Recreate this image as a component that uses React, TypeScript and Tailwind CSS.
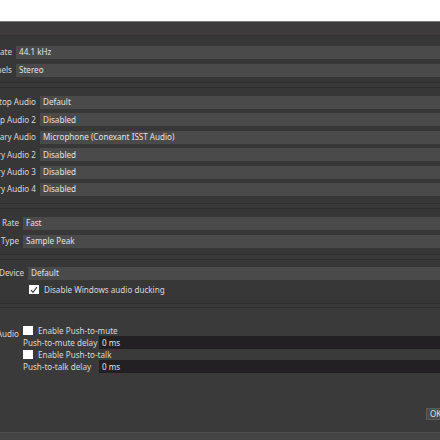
import React from 'react';

const font = { fontFamily: '"Noto Sans", "Open Sans", sans-serif' };

function Field({ label, value, labelW, dark, left }: { label: string; value: string; labelW: string; dark?: boolean; left?: boolean }) {
  return (
    <div className="flex h-[13px] items-center">
      <div className={`${labelW} shrink-0 flex ${left ? 'justify-start' : 'justify-end pr-[4px]'} whitespace-nowrap text-[#d8d8d8]`}>
        <span>{label}</span>
      </div>
      <div className={`flex-1 h-full flex items-center pl-[3px] text-[#e2e2e2] ${dark ? 'bg-[#222022]' : 'bg-[#4a4a4a]'}`}>
        {value}
      </div>
    </div>
  );
}

function Check({ checked, label }: { checked?: boolean; label: string }) {
  return (
    <div className="flex items-center h-[10px] gap-[5px] text-[#d8d8d8]">
      <div className="w-[10px] h-[9px] bg-white flex items-center justify-center">
        {checked && (
          <svg width="8" height="8" viewBox="0 0 8 8">
            <path d="M1 4.2 L3 6.4 L7 1" fill="none" stroke="#333" strokeWidth="1.1" />
          </svg>
        )}
      </div>
      <span>{label}</span>
    </div>
  );
}

export default function App() {
  return (
    <div className="w-[440px] h-[440px] overflow-hidden bg-[#3a393a] flex flex-col text-[8.1px] leading-none" style={font}>
      <div className="h-[21px] bg-white shrink-0" />
      <div className="h-[1px] bg-[#7d7d7d] shrink-0" />
      <div className="h-[14px] bg-[#3e3b3c] border-b border-[#333233] shrink-0" />

      {/* General */}
      <div className="bg-[#383738] pt-[10px] pb-[5px] flex flex-col gap-[5px] border-b border-[#2f2e2f]">
        <Field labelW="w-[16px]" label="Sample Rate" value="44.1 kHz" />
        <Field labelW="w-[16px]" label="Channels" value="Stereo" />
      </div>
      <div className="h-[4px] bg-[#3a393a]" />

      {/* Global Audio Devices */}
      <div className="bg-[#383738] border-t border-[#2f2e2f] pt-[8px] pb-[7px] flex flex-col gap-[4.4px] border-b">
        <Field labelW="w-[40px]" label="Desktop Audio" value="Default" />
        <Field labelW="w-[40px]" label="Desktop Audio 2" value="Disabled" />
        <Field labelW="w-[40px]" label="Mic/Auxiliary Audio" value="Microphone (Conexant ISST Audio)" />
        <Field labelW="w-[40px]" label="Mic/Auxiliary Audio 2" value="Disabled" />
        <Field labelW="w-[40px]" label="Mic/Auxiliary Audio 3" value="Disabled" />
        <Field labelW="w-[40px]" label="Mic/Auxiliary Audio 4" value="Disabled" />
      </div>
      <div className="h-[4px] bg-[#3a393a]" />

      {/* Meters */}
      <div className="bg-[#383738] border-y border-[#2f2e2f] pt-[8px] pb-[6px] flex flex-col gap-[5px]">
        <Field labelW="w-[23px]" label="Decay Rate" value="Fast" />
        <Field labelW="w-[23px]" label="Peak Meter Type" value="Sample Peak" />
      </div>
      <div className="h-[4px] bg-[#3a393a]" />

      {/* Advanced */}
      <div className="bg-[#383738] border-y border-[#2f2e2f] pt-[7px] pb-[8px] flex flex-col gap-[5px]">
        <Field labelW="w-[28px]" label="Monitoring Device" value="Default" />
        <div className="pl-[29px]">
          <Check checked label="Disable Windows audio ducking" />
        </div>
      </div>
      <div className="h-[3px] bg-[#3a393a]" />

      {/* Hotkeys */}
      <div className="flex-1 bg-[#3b3a3b] border-t border-[#2f2e2f] flex flex-col">
        <div className="flex pt-[18px]">
          <div className="w-[23px] shrink-0 flex justify-end pr-[4px] whitespace-nowrap text-[#d8d8d8] pt-[4px]">
            <span>Mic/Aux Audio</span>
          </div>
          <div className="flex-1 flex flex-col gap-[0.5px]">
            <Check label="Enable Push-to-mute" />
            <Field labelW="w-[76px]" label="Push-to-mute delay" value="0 ms" dark left />
            <Check label="Enable Push-to-talk" />
            <Field labelW="w-[76px]" label="Push-to-talk delay" value="0 ms" dark left />
          </div>
        </div>
        <div className="flex-1" />
        <div className="flex justify-end pb-[12px]">
          <div className="w-[20px] h-[12px] bg-[#4c4b4c] border border-[#5c5b5c] text-[#e0e0e0] flex items-center pl-[3px] mr-[-6px]">
            OK
          </div>
        </div>
      </div>
      <div className="h-[8px] bg-[#454445] border-t border-[#4f4e4f] shrink-0" />
    </div>
  );
}
